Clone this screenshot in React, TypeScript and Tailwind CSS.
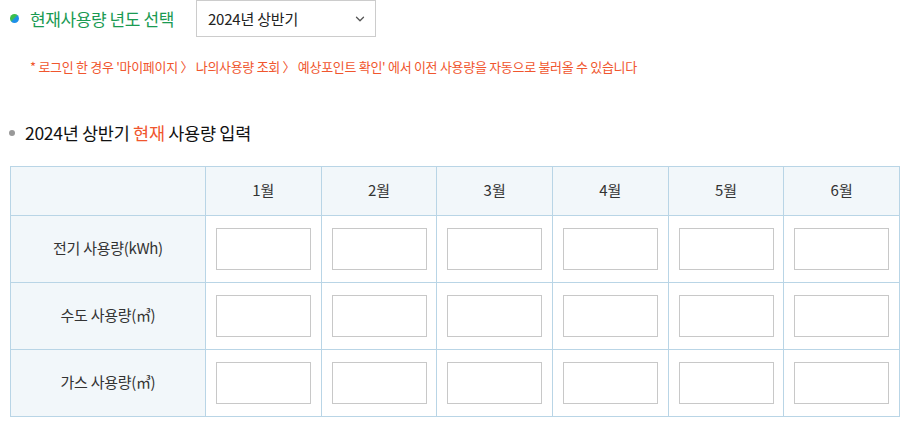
import { ChevronDown } from "lucide-react"

const months = ["1월", "2월", "3월", "4월", "5월", "6월"]
const rows = ["전기 사용량(kWh)", "수도 사용량(㎥)", "가스 사용량(㎥)"]

export default function App() {
    return (
        <div className="w-[919px] h-[427px] bg-white font-['Noto_Sans_CJK_KR',sans-serif] text-[#222] overflow-hidden">
            <div className="flex items-center h-[37px] pl-[10px]">
                <span className="w-[9px] h-[9px] rounded-full bg-[linear-gradient(135deg,#3cbf4a_0%,#3cbf4a_40%,#1e90e8_55%,#1e90e8_100%)]" />
                <span className="ml-[11px] text-[17px] leading-none text-[#1a9a52] tracking-[-0.4px]">현재사용량 년도 선택</span>
                <div className="ml-[22px] w-[180px] h-[37px] border border-[#cccccc] flex items-center justify-between pl-[11px] pr-[8px]">
                    <span className="text-[15px] leading-none text-[#222] tracking-[-0.2px]">2024년 상반기</span>
                    <ChevronDown size={14} strokeWidth={2.2} className="text-[#555]" />
                </div>
            </div>

            <p className="mt-[23px] pl-[30px] text-[13px] leading-none text-[#f0562e] tracking-[-0.3px]">
                * 로그인 한 경우 '마이페이지 〉 나의사용량 조회 〉 예상포인트 확인' 에서 이전 사용량을 자동으로 불러올 수 있습니다
            </p>

            <div className="mt-[51px] flex items-center pl-[9px]">
                <span className="w-[6px] h-[6px] rounded-full bg-[#999]" />
                <h2 className="ml-[10px] text-[17.5px] leading-none tracking-[-0.3px] text-[#111]">
                    2024년 상반기 <span className="text-[#f0562e]">현재</span> 사용량 입력
                </h2>
            </div>

            <table className="mt-[24px] ml-[10px] w-[890px] border-collapse table-fixed">
                <colgroup>
                    <col className="w-[195px]" />
                    {months.map((m) => (
                        <col key={m} />
                    ))}
                </colgroup>
                <thead>
                    <tr className="h-[49px] bg-[#f2f7fa]">
                        <th className="border border-[#b9d5e6] font-normal" />
                        {months.map((m) => (
                            <th key={m} className="border border-[#b9d5e6] font-normal text-[15px] text-[#333]">
                                {m}
                            </th>
                        ))}
                    </tr>
                </thead>
                <tbody>
                    {rows.map((r) => (
                        <tr key={r} className="h-[67px]">
                            <td className="border border-[#b9d5e6] bg-[#f2f7fa] text-center text-[15px] text-[#333] tracking-[-0.3px]">
                                {r}
                            </td>
                            {months.map((m) => (
                                <td key={m} className="border border-[#b9d5e6] px-[10px]">
                                    <input className="block w-[95px] h-[42px] border border-[#c8c8c8] outline-none" />
                                </td>
                            ))}
                        </tr>
                    ))}
                </tbody>
            </table>
        </div>
    )
}
